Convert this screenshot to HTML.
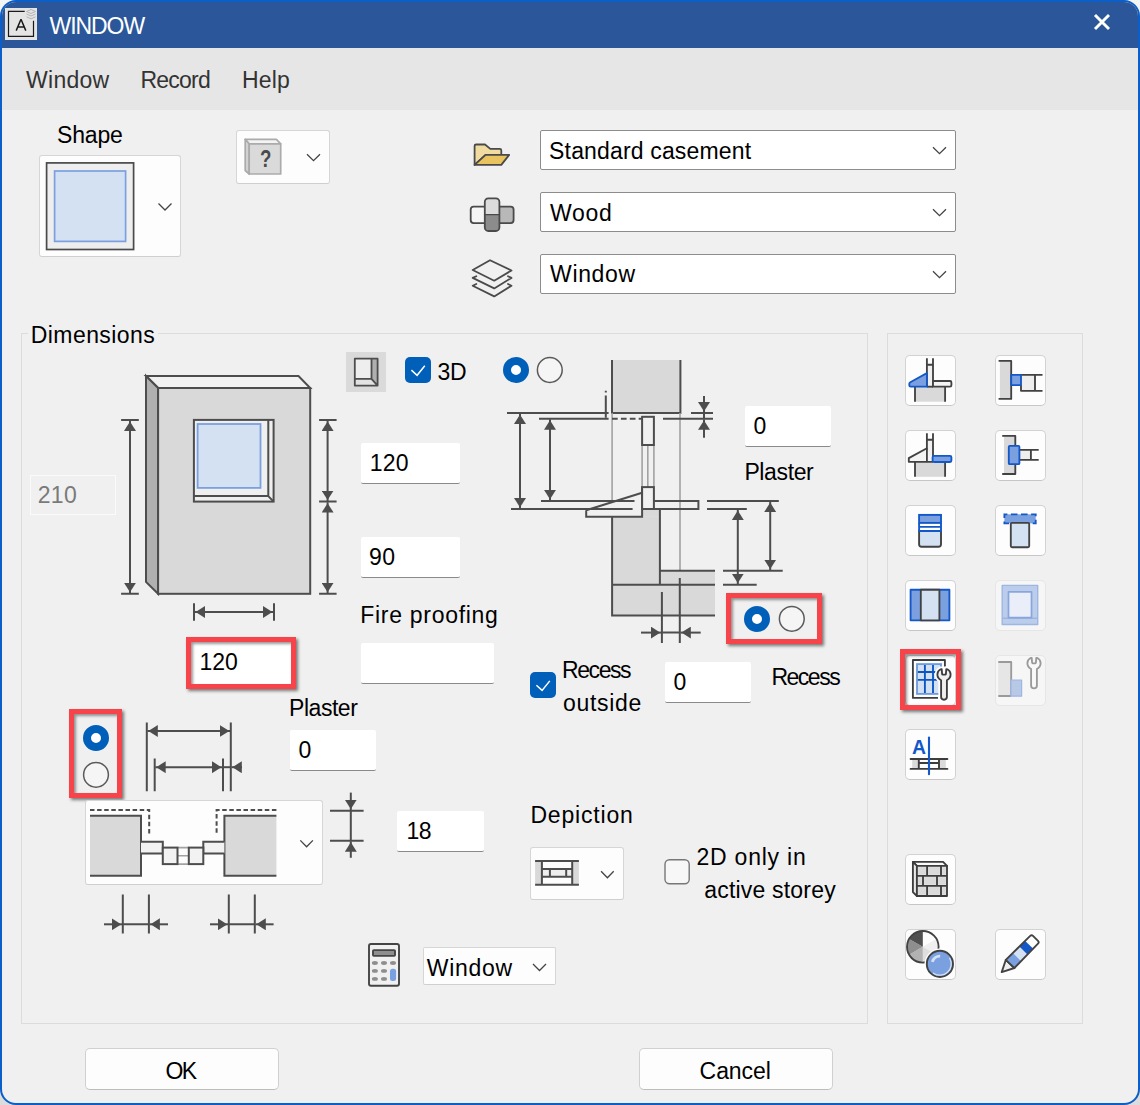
<!DOCTYPE html>
<html>
<head>
<meta charset="utf-8">
<title>WINDOW</title>
<style>
*{box-sizing:border-box;margin:0;padding:0}
html,body{width:1140px;height:1105px;overflow:hidden;background:linear-gradient(#f4f4f4,#dcdcdc);font-family:"Liberation Sans",sans-serif;font-size:24px;color:#000}
#win{position:absolute;left:0;top:0;width:1140px;height:1105px;background:#f0f0f0;border:2px solid #0c5fc9;border-radius:16px;overflow:hidden}
#page{position:absolute;left:-2px;top:-2px;width:1140px;height:1105px}
#title{position:absolute;left:0;top:0;width:1140px;height:48px;background:#2b579a}
#menu{position:absolute;left:0;top:48px;width:1140px;height:62px;background:#e6e6e6}
.t{position:absolute;white-space:nowrap;line-height:28px;height:28px}
.box{position:absolute;background:#fdfdfd;border:1px solid #d6d6d6;border-bottom-color:#cfcfcf;border-radius:3px}
.dd{position:absolute;background:#fff;border:1px solid #8c8c8c;border-radius:2px}
.inp{position:absolute;background:#fff;border-bottom:1px solid #8a8a8a;border-radius:2px}
.grp{position:absolute;border:1px solid #dcdcdc}
.btn{position:absolute;background:#fdfdfd;border:1px solid #d0d0d0;border-bottom-color:#bdbdbd;border-radius:5px}
.ib{position:absolute;width:51px;height:51px;background:#fdfdfd;border:1px solid #d2d2d2;border-bottom-color:#c6c6c6;border-radius:5px}
.red{position:absolute;border:5px solid #f7434a;box-shadow:2px 2px 3px rgba(0,0,0,.5),inset 2px 2px 3px rgba(0,0,0,.4)}
.ron{position:absolute;width:26px;height:26px;border-radius:50%;background:#fff;border:8px solid #005fb8}
.roff{position:absolute;width:26px;height:26px;border-radius:50%;background:#f4f4f4;border:1.5px solid #5c5c5c}
.chk{position:absolute;width:26px;height:26px;border-radius:5px;background:#005fb8}
svg{position:absolute;left:0;top:0;overflow:visible}
</style>
</head>
<body>
<div id="win"><div id="page">
<div id="title"></div>
<div id="menu"></div>

<!-- GROUPS -->
<div class="grp" style="left:21px;top:333px;width:847px;height:691px"></div>
<div style="position:absolute;left:28px;top:331px;width:130px;height:6px;background:#f0f0f0"></div>
<div class="grp" style="left:887px;top:333px;width:196px;height:691px"></div>

<!-- SVGLAYER -->


<!-- title bar -->
<div style="position:absolute;left:5px;top:8px;width:32px;height:32px;background:#e4e4e4"></div>
<!-- menu -->
<!-- top area -->
<div class="box" style="left:39px;top:155px;width:142px;height:102px"></div>
<div class="box" style="left:236px;top:130px;width:94px;height:54px"></div>
<div class="dd" style="left:540px;top:130px;width:416px;height:40px"></div>
<div class="dd" style="left:540px;top:192px;width:416px;height:40px"></div>
<div class="dd" style="left:540px;top:254px;width:416px;height:40px"></div>
<!-- dimensions group -->
<div style="position:absolute;left:346px;top:352px;width:40px;height:40px;background:#dadada"></div>
<div class="chk" style="left:405px;top:357.1px"></div>
<div class="ron" style="left:503px;top:357px"></div>
<div style="position:absolute;left:30px;top:475px;width:86px;height:40px;border:1px solid #fafafa;background:#f0f0f0"></div>
<div class="inp" style="left:361px;top:443px;width:99px;height:41px"></div>
<div class="inp" style="left:361px;top:537px;width:99px;height:40.5px"></div>
<div class="inp" style="left:361px;top:643px;width:133px;height:40.5px"></div>
<div class="inp" style="left:191px;top:642px;width:100px;height:42px;border-bottom:none"></div>
<div class="red" style="left:186px;top:637.4px;width:110px;height:51.5px"></div>
<div class="red" style="left:69px;top:708.7px;width:53px;height:89px"></div>
<div class="ron" style="left:83px;top:725px"></div>
<div class="inp" style="left:290px;top:730px;width:86px;height:40.5px"></div>
<div class="box" style="left:85px;top:800px;width:238px;height:85px"></div>
<div class="inp" style="left:397px;top:810.5px;width:86.5px;height:41px"></div>
<!-- section right -->
<div class="inp" style="left:745px;top:406px;width:86px;height:40.5px"></div>
<div class="red" style="left:726.2px;top:593.3px;width:95.6px;height:51.2px"></div>
<div class="ron" style="left:744px;top:606px"></div>
<div class="chk" style="left:530px;top:672.2px"></div>
<div class="inp" style="left:665px;top:662px;width:86px;height:40.5px"></div>
<div class="box" style="left:530px;top:847px;width:94px;height:53px"></div>
<div class="box" style="left:423px;top:947px;width:133px;height:38px;border-radius:2px"></div>
<!-- buttons -->
<div class="btn" style="left:85px;top:1048px;width:194px;height:42px"></div>
<div class="btn" style="left:639px;top:1048px;width:194px;height:42px"></div>
<!-- icon buttons -->
<div class="ib" style="left:905px;top:355px"></div>
<div class="ib" style="left:995px;top:355px"></div>
<div class="ib" style="left:905px;top:430px"></div>
<div class="ib" style="left:995px;top:430px"></div>
<div class="ib" style="left:905px;top:505px"></div>
<div class="ib" style="left:995px;top:505px"></div>
<div class="ib" style="left:905px;top:580px"></div>
<div class="ib" style="left:995px;top:580px;background:#f6f6f6;border-color:#e6e6e6"></div>
<div class="ib" style="left:905px;top:655px"></div>
<div class="red" style="left:900.2px;top:649.4px;width:60.7px;height:60.6px"></div>
<div class="ib" style="left:995px;top:655px;background:#f6f6f6;border-color:#e6e6e6"></div>
<div class="ib" style="left:905px;top:729px"></div>
<div class="ib" style="left:905px;top:854px"></div>
<div class="ib" style="left:905px;top:929px"></div>
<div class="ib" style="left:995px;top:929px"></div>

<!-- T-BEGIN -->
<div class="t" style="left:49.60px;top:12px;font-size:23px;letter-spacing:-1.082px;color:#fff;">WINDOW</div>
<div class="t" style="left:26.00px;top:66px;font-size:23px;letter-spacing:0.281px;color:#333;">Window</div>
<div class="t" style="left:140.50px;top:66px;font-size:23px;letter-spacing:-0.790px;color:#333;">Record</div>
<div class="t" style="left:242.00px;top:66px;font-size:23px;letter-spacing:0.163px;color:#333;">Help</div>
<div class="t" style="left:57.00px;top:121px;font-size:23px;letter-spacing:-0.179px;">Shape</div>
<div class="t" style="left:549.10px;top:137px;font-size:23px;letter-spacing:0.159px;">Standard casement</div>
<div class="t" style="left:550.10px;top:199px;font-size:23px;letter-spacing:0.675px;">Wood</div>
<div class="t" style="left:550.10px;top:260px;font-size:23px;letter-spacing:0.621px;">Window</div>
<div class="t" style="left:30.80px;top:321px;font-size:23px;letter-spacing:0.416px;">Dimensions</div>
<div class="t" style="left:437.60px;top:358px;font-size:23px;letter-spacing:-0.492px;">3D</div>
<div class="t" style="left:37.70px;top:481px;font-size:23px;letter-spacing:0.308px;color:#7a7a7a;">210</div>
<div class="t" style="left:369.80px;top:449px;font-size:23px;letter-spacing:0.158px;">120</div>
<div class="t" style="left:369.00px;top:543px;font-size:23px;letter-spacing:0.408px;">90</div>
<div class="t" style="left:360.30px;top:601px;font-size:23px;letter-spacing:0.706px;">Fire proofing</div>
<div class="t" style="left:199.60px;top:648px;font-size:23px;letter-spacing:-0.042px;">120</div>
<div class="t" style="left:289.10px;top:694px;font-size:23px;letter-spacing:-0.471px;">Plaster</div>
<div class="t" style="left:298.50px;top:736px;font-size:23px;letter-spacing:0.000px;">0</div>
<div class="t" style="left:406.60px;top:817px;font-size:23px;letter-spacing:-0.592px;">18</div>
<div class="t" style="left:753.60px;top:412px;font-size:23px;letter-spacing:0.000px;">0</div>
<div class="t" style="left:744.40px;top:458px;font-size:23px;letter-spacing:-0.371px;">Plaster</div>
<div class="t" style="left:562.00px;top:656px;font-size:23px;letter-spacing:-1.419px;">Recess</div>
<div class="t" style="left:563.00px;top:689px;font-size:23px;letter-spacing:0.671px;">outside</div>
<div class="t" style="left:673.50px;top:668px;font-size:23px;letter-spacing:0.000px;">0</div>
<div class="t" style="left:771.40px;top:663px;font-size:23px;letter-spacing:-1.479px;">Recess</div>
<div class="t" style="left:530.40px;top:801px;font-size:23px;letter-spacing:0.826px;">Depiction</div>
<div class="t" style="left:696.50px;top:843px;font-size:23px;letter-spacing:0.768px;">2D only in</div>
<div class="t" style="left:704.20px;top:876px;font-size:23px;letter-spacing:0.200px;">active storey</div>
<div class="t" style="left:426.80px;top:954px;font-size:23px;letter-spacing:0.681px;">Window</div>
<div class="t" style="left:165.50px;top:1057px;font-size:23px;letter-spacing:-1.590px;">OK</div>
<div class="t" style="left:699.60px;top:1057px;font-size:23px;letter-spacing:-0.077px;">Cancel</div>
<!-- T-END -->
<!-- TEXTS-END -->

<svg width="1140" height="1105" viewBox="0 0 1140 1105" fill="none" stroke-linejoin="miter">
<defs>
<marker id="ah" viewBox="0 0 9.4 12" refX="10.4" refY="6" markerWidth="9.4" markerHeight="12" markerUnits="userSpaceOnUse" orient="auto-start-reverse"><path d="M0,0 L9.4,6 L0,12 z" fill="#4d4d4d" stroke="none"/></marker>
</defs>
<!-- radios off + checkbox -->
<g stroke="#5a5a5a" stroke-width="1.5" fill="#f5f5f5">
<circle cx="549.8" cy="370" r="12.4"/><circle cx="96" cy="774.8" r="12.4"/><circle cx="791.8" cy="618.8" r="12.4"/>
<rect x="665" y="859.8" width="24.2" height="24" rx="4.5" stroke="#777" stroke-width="1.4" fill="#f7f7f7"/>
</g>
<!-- S1: title + top icons -->
<g id="s1">
<path d="M24.7,11.4 H8.5 V36.3 H33.5 V20.8" stroke="#1a1a1a" stroke-width="1.2"/>
<path d="M21,19.3 L16.2,30.6 M21,19.3 L25.8,30.6 M17.7,26.9 H24.3" stroke="#1a1a1a" stroke-width="1.5"/>
<path d="M31,9.5 l4.5,2 l-4.5,2 l-4.5,-2 z M26.5,14 l4.5,2 l4.5,-2 M26.5,16.8 l4.5,2 l4.5,-2" stroke="#b4b4b4" stroke-width="1"/>
<path d="M1095,15 L1109,29 M1109,15 L1095,29" stroke="#fff" stroke-width="2.9"/>
<!-- shape icon -->
<rect x="46.6" y="162.9" width="87" height="86.6" fill="#eeeeee" stroke="#4a4a4a" stroke-width="1.7"/>
<rect x="54.6" y="171" width="71" height="70.4" fill="#d3e1f3" stroke="#7ba0e0" stroke-width="1.7"/>
<path d="M158.5,203.5 l6.5,6.5 l6.5,-6.5" stroke="#444" stroke-width="1.3"/>
<!-- cube ? -->
<path d="M245.2,139.4 H276.4 L280.7,143.8 H249.2 z" fill="#f4f4f4" stroke="#ababab" stroke-width="1.7" stroke-linejoin="round"/>
<path d="M245.2,139.4 L249.2,143.8 V174 L245.2,170.5 z" fill="#d2d2d2" stroke="#ababab" stroke-width="1.7" stroke-linejoin="round"/>
<rect x="249.2" y="143.8" width="31.5" height="30.2" fill="#dadada" stroke="#ababab" stroke-width="1.7" stroke-linejoin="round"/>
<path d="M307,154.2 l6.5,6.5 l6.5,-6.5" stroke="#444" stroke-width="1.3"/>
<!-- dropdown chevrons -->
<path d="M933,147.2 l6.5,6.5 l6.5,-6.5" stroke="#444" stroke-width="1.3"/>
<path d="M933,209.2 l6.5,6.5 l6.5,-6.5" stroke="#444" stroke-width="1.3"/>
<path d="M933,271.2 l6.5,6.5 l6.5,-6.5" stroke="#444" stroke-width="1.3"/>
<!-- folder -->
<path d="M474.6,164.9 V146 q0,-1.5 1.5,-1.5 H485 L490.3,148.9 H499.8 q1.5,0 1.5,1.5 V154.9 L485.6,154.9 z" fill="#f0dca0" stroke="#4a4a4a" stroke-width="1.8" stroke-linejoin="round"/>
<path d="M474.6,164.9 L485.6,154.9 H509.2 L501.3,164.9 z" fill="#e8c35e" stroke="#4a4a4a" stroke-width="1.8" stroke-linejoin="round"/>
<!-- cross -->
<rect x="470.7" y="206.6" width="21" height="16.5" rx="3" fill="#f6f6f6" stroke="#4a4a4a" stroke-width="1.8"/>
<rect x="492" y="206.6" width="21.6" height="16.5" rx="3" fill="#b8b8b8" stroke="#4a4a4a" stroke-width="1.8"/>
<path d="M484.8,214.6 V201.9 q0,-3.5 3.5,-3.5 h7.6 q3.5,0 3.5,3.5 V214.6 z" fill="#dcdcdc" stroke="none"/>
<path d="M484.8,214.6 V227.5 q0,3.5 3.5,3.5 h7.6 q3.5,0 3.5,-3.5 V214.6 z" fill="#8c8c8c" stroke="none"/>
<rect x="484.8" y="198.4" width="14.6" height="32.6" rx="3.5" stroke="#4a4a4a" stroke-width="1.8"/>
<path d="M484.8,214.6 H499.4" stroke="#4a4a4a" stroke-width="1.2"/>
<!-- layers -->
<path d="M490,260.2 L511.5,270.5 L494.2,280.7 L472.7,270 z" stroke="#4a4a4a" stroke-width="1.8" stroke-linejoin="round"/>
<path d="M476.3,276.2 L472.7,277.9 L494.2,288.4 L511.5,277.9 L508,276.2" stroke="#4a4a4a" stroke-width="1.8" stroke-linejoin="round" stroke-linecap="round"/>
<path d="M476.3,284 L472.7,285.7 L494.2,296.4 L511.5,285.7 L508,284" stroke="#4a4a4a" stroke-width="1.8" stroke-linejoin="round" stroke-linecap="round"/>
</g>
<!-- S2: wall preview -->
<g id="s2" stroke="#4d4d4d" stroke-width="2">
<path d="M146,376 H298.5 L310.2,388 H158.1 z" fill="#f2f2f2"/>
<path d="M146,376 L158.1,388 V593.8 L146,581.9 z" fill="#b0b0b0"/>
<rect x="158.1" y="388" width="152.1" height="205.8" fill="#d9d9d9"/>
<rect x="193.9" y="419.9" width="79.7" height="81.7" fill="#efefef"/>
<path d="M268.3,419.9 V496.1 H193.9 M268.3,496.1 L273.6,501.6" />
<rect x="197.6" y="424" width="62.9" height="63.9" fill="#d3e1f3" stroke="#7ba0e0" stroke-width="1.8"/>
<!-- left dim -->
<path d="M121.1,419.9 H138.8 M121.1,593.8 H138.8"/>
<line x1="130" y1="420.5" x2="130" y2="593.2" marker-start="url(#ah)" marker-end="url(#ah)"/>
<!-- right dim -->
<path d="M319.1,419.9 H336.6 M319.1,501.6 H336.6 M319.1,593.8 H336.6"/>
<line x1="327.6" y1="420.5" x2="327.6" y2="501" marker-start="url(#ah)" marker-end="url(#ah)"/>
<line x1="327.6" y1="502.2" x2="327.6" y2="593.2" marker-start="url(#ah)" marker-end="url(#ah)"/>
<!-- bottom dim -->
<path d="M194,603.2 V620.7 M274,603.2 V620.7"/>
<line x1="194.6" y1="612" x2="273.4" y2="612" marker-start="url(#ah)" marker-end="url(#ah)"/>
<!-- toggle icon 346..386 -->
<rect x="354.8" y="358.7" width="22.8" height="26.9" fill="#eeeeee" stroke="none"/><path d="M371.5,358.7 H377.6 V385.6 L371.5,378.8 z" fill="#b0b0b0" stroke="none"/><path d="M354.8,378.8 H371.5 L377.6,385.6 H354.8 z" fill="#e2e2e2" stroke="none"/><path d="M354.8,358.7 H377.6 V385.6 H354.8 z M371.5,358.7 V378.8 H354.8 M371.5,378.8 L377.6,385.6" stroke-width="1.8" stroke-linejoin="round"/>
</g>
<!-- S3: section -->
<g id="s3" stroke="#4d4d4d" stroke-width="2">
<rect x="612" y="360" width="68.4" height="53" fill="#d9d9d9" stroke="none"/>
<path d="M612,360 V413 H680.4 V360"/>
<path d="M612.1,413 V500 M680,413 V570.7" stroke="#a2a2a2" stroke-width="1.6"/>
<path d="M586.2,510.3 L642.1,492.8 V516.8 H586.2 z" fill="#f0f0f0" stroke="none"/>
<path d="M642.1,445 V487 M647.8,445 V487 M653.9,445 V487" stroke="#a2a2a2" stroke-width="1.6"/>
<path d="M605.8,390.8 V392.6 M605.8,395.4 V417.8"/>
<path d="M507,413 H608.6 M539,418.7 H608.6"/>
<path d="M612,418.7 H641.8" stroke-dasharray="5.7,3.2"/>
<path d="M691,413 H713 M663,418.7 H713 M704,413 V418.7"/>
<line x1="704" y1="396" x2="704" y2="412.4" marker-end="url(#ah)"/>
<line x1="704" y1="437.8" x2="704" y2="419.4" marker-end="url(#ah)"/>
<rect x="642.1" y="416.8" width="11.8" height="28.2" fill="#f0f0f0"/>
<!-- left dims -->
<line x1="520" y1="413.6" x2="520" y2="508.4" marker-start="url(#ah)" marker-end="url(#ah)"/>
<line x1="550" y1="419.3" x2="550" y2="500.3" marker-start="url(#ah)" marker-end="url(#ah)"/>
<path d="M541,501 H634.5 M511,509 H632.6"/>
<!-- lower wall -->
<path d="M612.1,516.8 H659.9 V570.7 H715 V615.4 H612.1 z" fill="#d9d9d9" stroke="none"/>
<path d="M642.1,509 H659.9 V516.8 H642.1 z" fill="#d9d9d9" stroke="none"/>
<path d="M612.1,516.8 V615.4 H715 M659.9,509 V584.7 M659.9,570.7 H715 M612.1,584.7 H715"/>
<!-- sill -->
<path d="M586.2,510.3 L642.1,492.8 M586.2,510.3 V516.8 H642.1 V487.1" fill="none"/>
<rect x="642.1" y="487.1" width="11.8" height="21.9" fill="#f0f0f0"/>
<path d="M653.9,501 H698.4 V509 H653.9" fill="none"/>
<!-- right dims -->
<path d="M707,501 H778.8 M707,509 H746.8 M723,570.7 H782.7 M723,584.7 H756.7"/>
<line x1="737.8" y1="509.6" x2="737.8" y2="584.1" marker-start="url(#ah)" marker-end="url(#ah)"/>
<line x1="770.2" y1="501.6" x2="770.2" y2="570.1" marker-start="url(#ah)" marker-end="url(#ah)"/>
<!-- bottom dim -->
<path d="M679.8,578 V643 M661.9,592 V643 M661.9,632.6 H679.8"/>
<line x1="641" y1="632.6" x2="661.3" y2="632.6" marker-end="url(#ah)"/>
<line x1="700.7" y1="632.6" x2="680.4" y2="632.6" marker-end="url(#ah)"/>
</g>
<!-- S4: plan -->
<g id="s4" stroke="#4d4d4d" stroke-width="2">
<path d="M146.8,722.6 V791.2 M154.7,758.5 V791.2 M223,758.5 V791.2 M230.8,722.6 V791.2"/>
<line x1="147.4" y1="731" x2="230.2" y2="731" marker-start="url(#ah)" marker-end="url(#ah)"/>
<line x1="155.3" y1="767.2" x2="222.4" y2="767.2" marker-start="url(#ah)" marker-end="url(#ah)"/>
<path d="M223,767.2 H230.8"/>
<line x1="242" y1="767.2" x2="231.4" y2="767.2" marker-end="url(#ah)"/>
<!-- walls -->
<rect x="90" y="815.8" width="51" height="59.9" fill="#d9d9d9" stroke="none"/>
<rect x="224.4" y="815.8" width="52" height="59.9" fill="#d9d9d9" stroke="none"/>
<path d="M90,815.8 H141 V875.7 H90 M276.4,815.8 H224.4 V875.7 H276.4"/>
<path d="M90,810 H149.2 V834.6 M276.4,810 H216.6 V834.6" stroke-dasharray="4.5,2.6"/>
<path d="M177.5,847.6 H188.8 M177.5,855.8 H188.8 M177.5,864.1 H188.8" stroke="#a2a2a2" stroke-width="1.6"/>
<path d="M141,841.8 H162.8 V853.4 H141 M224.4,841.8 H203.3 V853.4 H224.4" fill="#f2f2f2"/>
<rect x="162.8" y="847.6" width="14.7" height="16.5" fill="#f2f2f2"/>
<rect x="188.8" y="847.6" width="14.5" height="16.5" fill="#f2f2f2"/>
<path d="M300.3,840.4 l6.3,6.4 l6.3,-6.4" stroke="#444" stroke-width="1.3"/>
<!-- bottom dims -->
<path d="M122.8,894.5 V933.6 M148.9,894.5 V933.6 M122.8,924.3 H148.9 M228.8,894.5 V933.6 M254.8,894.5 V933.6 M228.8,924.3 H254.8"/>
<line x1="104" y1="924.3" x2="122.2" y2="924.3" marker-end="url(#ah)"/>
<line x1="168" y1="924.3" x2="149.5" y2="924.3" marker-end="url(#ah)"/>
<line x1="210" y1="924.3" x2="228.2" y2="924.3" marker-end="url(#ah)"/>
<line x1="273.6" y1="924.3" x2="255.4" y2="924.3" marker-end="url(#ah)"/>
<!-- 18 dim -->
<path d="M330,810.7 H363.6 M330,840.7 H363.6 M350.8,810.7 V840.7"/>
<line x1="350.8" y1="792.6" x2="350.8" y2="810.1" marker-end="url(#ah)"/>
<line x1="350.8" y1="857.8" x2="350.8" y2="841.3" marker-end="url(#ah)"/>
</g>
<!-- S5: depiction, calculator, checks -->
<g id="s5" stroke="#4d4d4d" stroke-width="2">
<rect x="535.1" y="861.1" width="6.8" height="23.7" fill="#d9d9d9" stroke="none"/>
<rect x="572.2" y="861.1" width="6.7" height="23.7" fill="#d9d9d9" stroke="none"/>
<rect x="541.9" y="869" width="30.3" height="7.8" fill="#eeeeee" stroke="none"/>
<path d="M535.1,861.1 H578.9 M535.1,884.8 H578.9 M541.9,861.1 V884.8 M572.2,861.1 V884.8 M541.9,869 H572.2 M541.9,876.8 H572.2 M549.9,869 V876.8 M566.2,869 V876.8"/>
<path d="M601.1,871.3 l6.3,6.4 l6.3,-6.4" stroke="#444" stroke-width="1.3"/>
<path d="M533,964 l6.5,6.5 l6.5,-6.5" stroke="#444" stroke-width="1.3"/>
<!-- calculator -->
<rect x="369" y="944" width="30" height="41.8" rx="2" fill="#f0f0f0" stroke="#444" stroke-width="1.9"/>
<rect x="373" y="950.1" width="22" height="5.8" rx=".8" fill="#8e8e8e" stroke="#444" stroke-width="1.9"/>
<g stroke="none" fill="#8e8e8e">
<ellipse cx="374.9" cy="963" rx="3" ry="1.9"/><ellipse cx="384" cy="963" rx="3" ry="1.9"/><ellipse cx="393" cy="963" rx="3" ry="1.9"/><ellipse cx="374.9" cy="970.9" rx="3" ry="1.9"/><ellipse cx="384" cy="970.9" rx="3" ry="1.9"/><ellipse cx="374.9" cy="978.9" rx="3" ry="1.9"/><ellipse cx="384" cy="978.9" rx="3" ry="1.9"/>
<rect x="390" y="968.8" width="6.1" height="12.3" rx="2.5" fill="#7ba0e0"/>
</g>
<!-- check marks -->
<path d="M411.4,370.1 L417.1,375.3 L424.8,365.8" stroke="#fff" stroke-width="1.5"/>
<path d="M536.4,685.2 L542.1,690.4 L549.8,680.9" stroke="#fff" stroke-width="1.5"/>
</g>
<!-- S6: right icons -->
<g id="s6" stroke="#424242" stroke-width="1.85" stroke-linejoin="round">
<!-- i1 -->
<rect x="915" y="386.7" width="30.1" height="15" fill="#d9d9d9" stroke="none"/>
<path d="M915,386.7 V401.7 M945.1,386.7 V401.7"/>
<rect x="926.9" y="364.7" width="6.1" height="22" fill="#f0f0f0" stroke="none"/>
<path d="M926.9,358.2 V386.7 M933,358.2 V386.7 M926.9,364.7 H933"/>
<path d="M933,381 H950 q1.4,0 1.4,1.4 V385.3 q0,1.4 -1.4,1.4 H933 z" fill="#f4f4f4"/>
<path d="M926.9,386.7 H933"/>
<path d="M926.9,373.1 L910.3,382.2 q-1,.6 -1,1.6 V385.3 q0,1.4 1.4,1.4 H926.9 z" fill="#7ba0e0" stroke="#1458c8"/>
<!-- i2 -->
<rect x="999.9" y="360.9" width="11.3" height="38" fill="#d9d9d9" stroke="none"/>
<path d="M998.6,360.9 H1011.2 V398.9 H998.6" fill="none"/>
<rect x="1021" y="374.9" width="14" height="15.9" fill="#eeeeee" stroke="none"/>
<path d="M1021,374.9 H1042.5 M1021,385.1 V390.8 H1042.5 M1035,374.9 V390.8" fill="none"/>
<rect x="1011.2" y="374.9" width="9.8" height="10.2" fill="#7ba0e0" stroke="#1458c8"/>
<!-- i3 -->
<rect x="915" y="461.8" width="30.1" height="15" fill="#d9d9d9" stroke="none"/>
<path d="M915,461.8 V476.7 M945.1,461.8 V476.7"/>
<rect x="926.9" y="439.7" width="6.1" height="22" fill="#f0f0f0" stroke="none"/>
<path d="M926.9,433.2 V461.8 M933,433.2 V461.8 M926.9,439.7 H933"/>
<path d="M926.9,448.2 L908.8,458.1 V461.8 H933" fill="#f4f4f4"/>
<path d="M926.9,448.2 V461.8"/>
<rect x="932.6" y="455.8" width="18.8" height="6.2" rx="1.4" fill="#7ba0e0" stroke="#1458c8"/>
<!-- i4 -->
<rect x="1004" y="435.9" width="11.3" height="38.1" fill="#d9d9d9" stroke="none"/>
<path d="M1002.2,435.9 H1015.3 V474 H1002.2" fill="none"/>
<rect x="1019.4" y="449.9" width="11.5" height="10" fill="#eeeeee" stroke="none"/>
<path d="M1019.4,449.9 H1038.7 M1019.4,459.9 H1038.7 M1030.9,449.9 V459.9" fill="none"/>
<rect x="1008.8" y="445.9" width="10.6" height="18.3" rx="1" fill="#7ba0e0" stroke="#1458c8"/>
<!-- i5 shutter -->
<path d="M919.1,531 V544.3 q0,2.5 2.5,2.5 H938.5 q2.5,0 2.5,-2.5 V531 z" fill="#d3e1f3" stroke="#424242" stroke-width="1.9"/>
<rect x="919.1" y="522.9" width="21.9" height="8.1" fill="#fffdf5" stroke="none"/>
<rect x="919.1" y="514.9" width="21.9" height="8" fill="#7ba0e0" stroke="#1258c8" stroke-width="1.9" stroke-linejoin="miter"/>
<path d="M919.1,522.9 V531 H941 V522.9 M919.1,526.9 H941" stroke="#1258c8" stroke-width="1.9" fill="none" stroke-linejoin="miter"/>
<!-- i6 -->
<rect x="1004.4" y="514.3" width="31.3" height="9.1" fill="#7ba0e0" stroke="#1458c8" stroke-dasharray="6.6,3.5" stroke-dashoffset="3.6" stroke-linejoin="miter"/>
<rect x="1010.8" y="522.8" width="18.4" height="24.4" rx="1.2" fill="#d3e1f3"/>
<!-- i7 -->
<rect x="910.6" y="589.7" width="38.8" height="30.6" fill="#7ba0e0" stroke="#1458c8"/>
<rect x="920.8" y="589.7" width="18.6" height="30.6" fill="#d3e1f3"/>
<!-- i8 disabled -->
<rect x="1002.2" y="585.4" width="35.5" height="39.1" fill="#bbcdea" stroke="#9db6e2" stroke-width="1.4"/>
<path d="M1002.2,618.2 H1037.7" stroke="#9db6e2" stroke-width="1.4"/>
<rect x="1008.5" y="591.8" width="23" height="25.8" fill="#e9eef8" stroke="#88a6dd" stroke-width="1.7"/>
<!-- i9 window+wrench -->
<path d="M938,697.9 H912.9 V660 H944.9 V666.5" fill="none" stroke="#3d3d3d"/>
<rect x="917" y="664.1" width="24" height="29.8" fill="#d3e1f3" stroke="#6f9ade" stroke-linejoin="miter"/>
<path d="M924.9,664.9 V693 M933,664.9 V693 M917.9,672 H937 M917.9,679.9 H937" stroke="#0b55c4" fill="none"/>
<path d="M941.7,669.2 L942.1,674 Q942.2,674.6 942.8,674.6 H945.2 Q945.8,674.6 945.9,674 L946.3,669.2 L947.4,669.3 C949.6,670.5 950.6,672.5 950.6,674.6 C950.6,677 949.2,679.1 946.9,680.3 V696.8 A2.9,2.9 0 0 1 941.1,696.8 V680.3 C938.8,679.1 937.4,677 937.4,674.6 C937.4,672.5 938.4,670.5 940.6,669.3 Z" fill="#fdfdfd" stroke="#fdfdfd" stroke-width="5.5"/>
<path d="M941.7,669.2 L942.1,674 Q942.2,674.6 942.8,674.6 H945.2 Q945.8,674.6 945.9,674 L946.3,669.2 L947.4,669.3 C949.6,670.5 950.6,672.5 950.6,674.6 C950.6,677 949.2,679.1 946.9,680.3 V696.8 A2.9,2.9 0 0 1 941.1,696.8 V680.3 C938.8,679.1 937.4,677 937.4,674.6 C937.4,672.5 938.4,670.5 940.6,669.3 Z" fill="#f0f0f0" stroke="#3d3d3d"/>
<!-- i10 disabled -->
<rect x="998.3" y="662" width="12.9" height="34" fill="#e6e6e6" stroke="none"/>
<path d="M998.3,662 H1011.2 V696 M998.3,696 H1011.2" stroke="#9a9a9a" fill="none"/>
<rect x="1011" y="680" width="10.6" height="16.2" fill="#b8c9e8" stroke="#9db6e2" stroke-width="1.2"/>
<path d="M941.7,669.2 L942.1,674 Q942.2,674.6 942.8,674.6 H945.2 Q945.8,674.6 945.9,674 L946.3,669.2 L947.4,669.3 C949.6,670.5 950.6,672.5 950.6,674.6 C950.6,677 949.2,679.1 946.9,680.3 V696.8 A2.9,2.9 0 0 1 941.1,696.8 V680.3 C938.8,679.1 937.4,677 937.4,674.6 C937.4,672.5 938.4,670.5 940.6,669.3 Z" transform="translate(90,-11.3)" fill="#f9f9f9" stroke="#9a9a9a"/>
<!-- i11 A| -->
<rect x="912.2" y="759.5" width="5.8" height="8.9" fill="#dadada" stroke="none"/>
<rect x="940" y="759.5" width="5.8" height="8.9" fill="#dadada" stroke="none"/>
<path d="M910.6,759 H947.4 M910.6,768.9 H947.4 M918.8,759 V768.9 M939,759 V768.9 M918.8,763 H939" fill="none" stroke="#3d3d3d" stroke-width="1.9" stroke-linecap="round"/>
<path d="M929,737.6 V774.3" stroke="#1258c8" stroke-width="2.1" stroke-linecap="round"/>
<!-- i12 bricks -->
<g stroke="#3d3d3d" stroke-width="1.85">
<path d="M912.9,861.8 H943.1 L947,865.8 H916.9 z" fill="#fafafa"/>
<path d="M912.9,861.8 L916.9,865.8 V896 L912.9,892.1 z" fill="#e8e8e8"/>
<rect x="916.9" y="865.8" width="30.1" height="30.2" fill="#e6e6e6"/>
<g stroke="none" fill="#dadada">
<rect x="918.2" y="867.1" width="7.7" height="7.5"/><rect x="928.3" y="867.1" width="11.5" height="7.5"/><rect x="942.2" y="867.1" width="3.6" height="7.5"/>
<rect x="918.2" y="877.2" width="3.6" height="7.3"/><rect x="924.2" y="877.2" width="11.6" height="7.3"/><rect x="938.2" y="877.2" width="7.6" height="7.3"/>
<rect x="918.2" y="887.1" width="7.7" height="7.6"/><rect x="928.3" y="887.1" width="11.5" height="7.6"/><rect x="942.2" y="887.1" width="3.6" height="7.6"/>
</g>
<path d="M916.9,875.9 H947 M916.9,885.8 H947 M927.1,865.8 V875.9 M941,865.8 V875.9 M923,875.9 V885.8 M937,875.9 V885.8 M927.1,885.8 V896 M941,885.8 V896" fill="none"/>
</g>
<!-- i13 pie + sphere -->
<g stroke="none">
<path d="M922.8,946.8 L922.80,931.00 A15.8,15.8 0 0 1 936.48,938.90 z" fill="#fdfdfd"/>
<path d="M922.8,946.8 L936.48,938.90 A15.8,15.8 0 0 1 936.48,954.70 z" fill="#efefef"/>
<path d="M922.8,946.8 L936.48,954.70 A15.8,15.8 0 0 1 922.80,962.60 z" fill="#dedede"/>
<path d="M922.8,946.8 L922.80,962.60 A15.8,15.8 0 0 1 909.12,954.70 z" fill="#b2b2b2"/>
<path d="M922.8,946.8 L909.12,954.70 A15.8,15.8 0 0 1 909.12,938.90 z" fill="#8e8e8e"/>
<path d="M922.8,946.8 L909.12,938.90 A15.8,15.8 0 0 1 922.80,931.00 z" fill="#505050"/>
</g>
<circle cx="922.8" cy="946.8" r="15.8" fill="none"/>
<circle cx="939.9" cy="963.9" r="15.4" fill="#fdfdfd" stroke="none"/>
<circle cx="939.9" cy="963.9" r="13.1" fill="#7ba0e0" stroke-width="1.9"/>
<path d="M932.37,961.88 A7.8,7.8 0 0 1 940.17,956.1" stroke="#d3e1f3" stroke-width="2.9" fill="none" stroke-linecap="butt"/>
<path d="M949.69,958.25 A11.3,11.3 0 0 1 933.42,973.16" stroke="#d3e1f3" stroke-width="1.3" fill="none" stroke-linecap="round"/>
<!-- i14 pencil -->
<path d="M1005.8,959.9 L1014.4,968 L1001.7,972.1 z" fill="#eeeeee"/>
<g stroke="none">
<path d="M1031.6,934.5 L1039.4,942.2 L1033,948.6 L1025.2,940.9 z" fill="#fdfdfd"/>
<path d="M1025.2,940.9 L1033,948.6 L1027.2,954.4 L1019.4,946.7 z" fill="#1458c8"/>
<path d="M1019.4,946.7 L1027.2,954.4 L1020.8,960.8 L1013,953.1 z" fill="#d3e1f3"/>
<path d="M1013,953.1 L1020.8,960.8 L1014.4,968 L1005.8,959.9 z" fill="#7ba0e0"/>
</g>
<path d="M1005.8,959.9 L1030.2,935.9 q1.4,-1.4 2.8,0 L1038,940.8 q1.4,1.4 0,2.8 L1014.4,968 z" fill="none"/>
</g>
</svg>
<div class="t" style="left:911.9px;top:733px;font-weight:bold;font-size:19.4px;color:#1258c8">A</div>

<div class="t" style="left:259.6px;top:145px;font-weight:bold;font-size:23.3px;color:#4a4a4a;transform:scaleX(.8);transform-origin:0 0">?</div>


</div></div>
</body>
</html>
